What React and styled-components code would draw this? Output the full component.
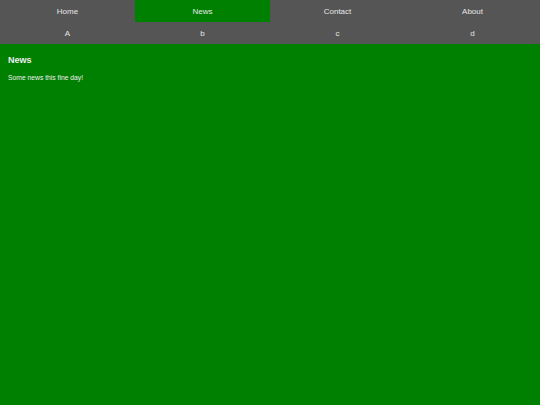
import styled, { createGlobalStyle } from "styled-components";

const Global = createGlobalStyle`
    html, body {
        margin: 0;
        padding: 0;
        height: 100%;
        background: green;
    }
    #root {
        height: 100%;
    }
    body {
        font-family: "Liberation Sans", Arial, sans-serif;
    }
`

const Page = styled.div`
    display: flex;
    flex-direction: column;
    height: 100%;
    background-color: #008000;
`

const TabBar = styled.nav`
    display: grid;
    grid-template-columns: repeat(4, 1fr);
    background-color: #555555;
`

const Tab = styled.div`
    height: 22px;
    display: flex;
    align-items: center;
    justify-content: center;
    font-size: 8px;
    color: #e6e6e6;
    background-color: ${props => props.active ? '#008000' : 'transparent'};
`

const Content = styled.main`
    padding: 11px 8px;
    color: #eeeeee;
`

const Title = styled.h3`
    margin: 0 0 8px 0;
    font-size: 9px;
    font-weight: bold;
`

const Text = styled.p`
    margin: 0;
    padding-top: 1px;
    font-size: 6.75px;
`

const tabs = ['Home', 'News', 'Contact', 'About'];
const subTabs = ['A', 'b', 'c', 'd'];

export default function App() {
    return (
        <>
            <Global />
            <Page>
                <TabBar>
                    {tabs.map(t => (
                        <Tab key={t} active={t === 'News'}>{t}</Tab>
                    ))}
                </TabBar>
                <TabBar>
                    {subTabs.map(t => (
                        <Tab key={t}>{t}</Tab>
                    ))}
                </TabBar>
                <Content>
                    <Title>News</Title>
                    <Text>Some news this fine day!</Text>
                </Content>
            </Page>
        </>
    )
}
